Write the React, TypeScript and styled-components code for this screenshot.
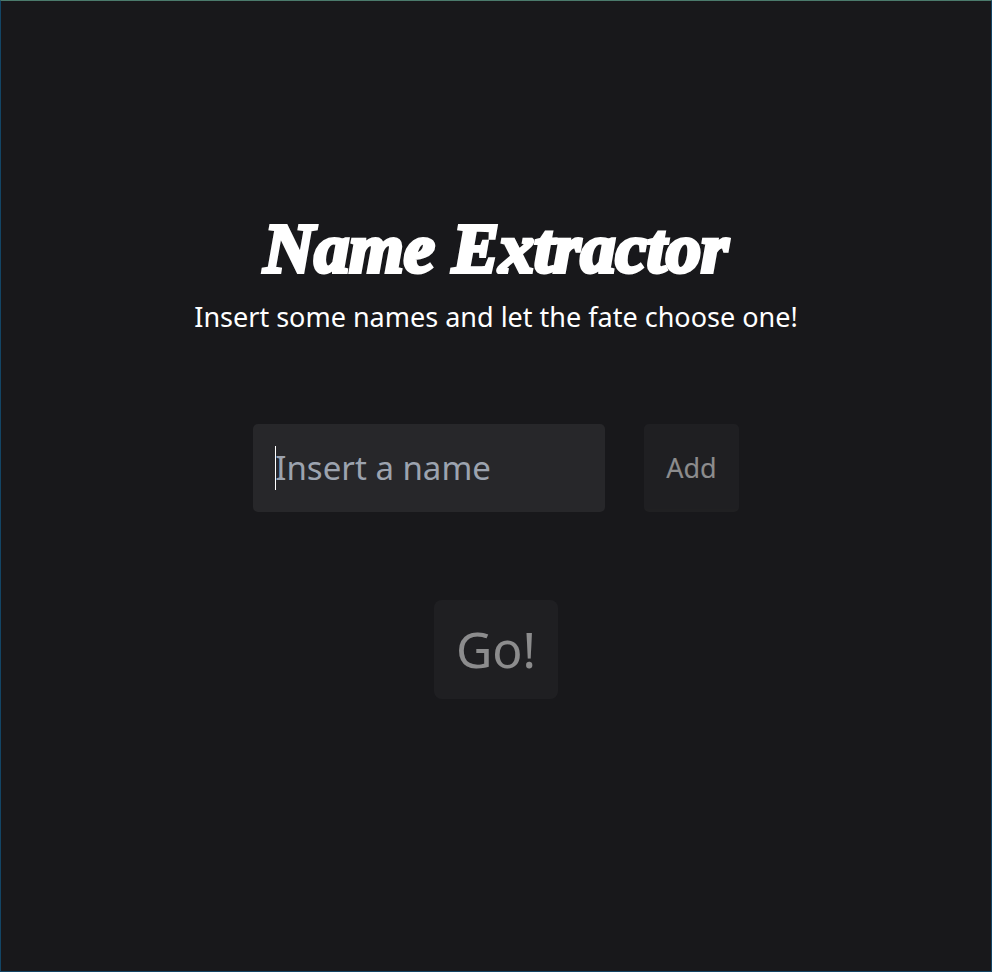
import React, { useState } from "react";
import styled, { createGlobalStyle } from "styled-components";

const GlobalStyle = createGlobalStyle`
  *, *::before, *::after { box-sizing: border-box; }
  body {
    margin: 0;
    background: #18181b;
    color: #ffffff;
    font-family: "Noto Sans", sans-serif;
  }
  button, input { font: inherit; color: inherit; }
`;

const Page = styled.main`
  min-height: 100vh;
  display: flex;
  flex-direction: column;
  align-items: center;
  padding: 204px 16px 64px;
  border: 1px solid #134565;
  border-top-color: #4b7a6c;
`;

const Header = styled.header`
  text-align: center;
`;

const Title = styled.h1`
  margin: 0 0 4px;
  font-family: "Liberation Serif", serif;
  font-size: 70px;
  font-style: italic;
  font-weight: 700;
  line-height: 88px;
  -webkit-text-stroke: 4px #ffffff;
`;

const Subtitle = styled.p`
  margin: 0;
  font-size: 27px;
  line-height: 40px;
`;

const NameForm = styled.form`
  display: flex;
  flex-wrap: wrap;
  justify-content: center;
  gap: 39px;
  margin: 87px 0 88px;
`;

const Field = styled.label`
  position: relative;
  display: flex;
`;

const NameInput = styled.input`
  width: 352px;
  max-width: 100%;
  padding: 22px;
  border: 0;
  border-radius: 5px;
  outline: none;
  background: #27272a;
  font-size: 33px;
  line-height: 44px;
  &::placeholder { color: #9ca3af; opacity: 1; }
`;

const Caret = styled.span`
  position: absolute;
  top: 22px;
  left: 22px;
  width: 1px;
  height: 44px;
  background: #ffffff;
`;

const Button = styled.button<{ $large?: boolean }>`
  padding: ${(p) => (p.$large ? "22px" : "24px 22px")};
  border: 0;
  border-radius: ${(p) => (p.$large ? 8 : 5)}px;
  background: #27272a;
  font-size: ${(p) => (p.$large ? 50 : 27)}px;
  line-height: ${(p) => (p.$large ? 55 : 40)}px;
  cursor: pointer;
  &:disabled { opacity: 0.5; cursor: default; }
`;

export default function App() {
  const [name, setName] = useState("");
  const [names, setNames] = useState<string[]>([]);

  const addName = (event: React.FormEvent) => {
    event.preventDefault();
    setNames([...names, name.trim()]);
    setName("");
  };

  return (
    <>
      <GlobalStyle />
      <Page>
        <Header>
          <Title>Name Extractor</Title>
          <Subtitle>Insert some names and let the fate choose one!</Subtitle>
        </Header>
        <NameForm onSubmit={addName}>
          <Field>
            <NameInput
              aria-label="Insert a name"
              placeholder="Insert a name"
              value={name}
              onChange={(event) => setName(event.target.value)}
            />
            {name === "" && <Caret />}
          </Field>
          <Button type="submit" disabled={!name.trim()}>Add</Button>
        </NameForm>
        <Button type="button" $large disabled={names.length < 2}>Go!</Button>
      </Page>
    </>
  );
}
